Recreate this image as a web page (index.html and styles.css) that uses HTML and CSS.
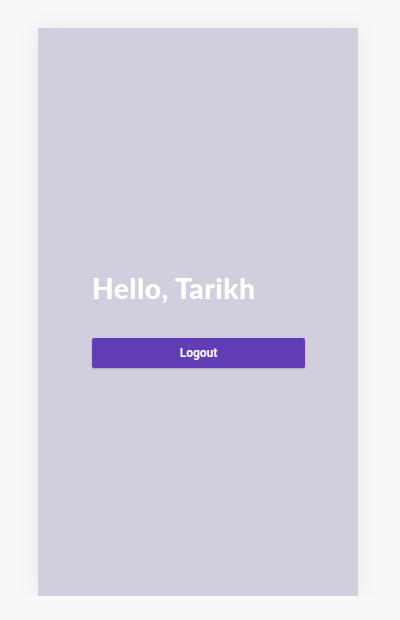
FILE: index.html
```html
<!DOCTYPE html>
<html>
<head>
<meta charset="utf-8">
<link rel="stylesheet" href="styles.css">
</head>
<body>
<div class="card">
  <div class="content">
    <h1 class="greeting">Hello, Tarikh</h1>
    <button class="logout">Logout</button>
  </div>
</div>
</body>
</html>
```
FILE: styles.css
```css
html, body {
  margin: 0;
  padding: 0;
}
body {
  background: #f7f8f8;
  padding-top: 28px;
  font-family: Roboto, "Liberation Sans", sans-serif;
}
.card {
  width: 320px;
  height: 568px;
  margin: 0 0 0 38px;
  background: #d1cfde;
  box-shadow: 0 0 24px rgba(0, 0, 0, 0.07);
  display: flex;
  flex-direction: column;
  justify-content: center;
}
.content {
  padding: 0 53px 0 54px;
  margin-top: 14px;
}
.greeting {
  margin: 0;
  color: #ffffff;
  font-family: Lato, sans-serif;
  font-weight: 900;
  font-size: 28px;
  line-height: 36px;
  letter-spacing: 0.55px;
}
.logout {
  display: block;
  width: 100%;
  height: 30px;
  margin-top: 32px;
  border: none;
  border-radius: 2px;
  background: #613db5;
  color: #ffffff;
  font-family: Roboto, sans-serif;
  font-weight: 700;
  font-size: 12px;
  box-shadow: 0 1px 2px rgba(0, 0, 0, 0.2);
  cursor: pointer;
}
```
